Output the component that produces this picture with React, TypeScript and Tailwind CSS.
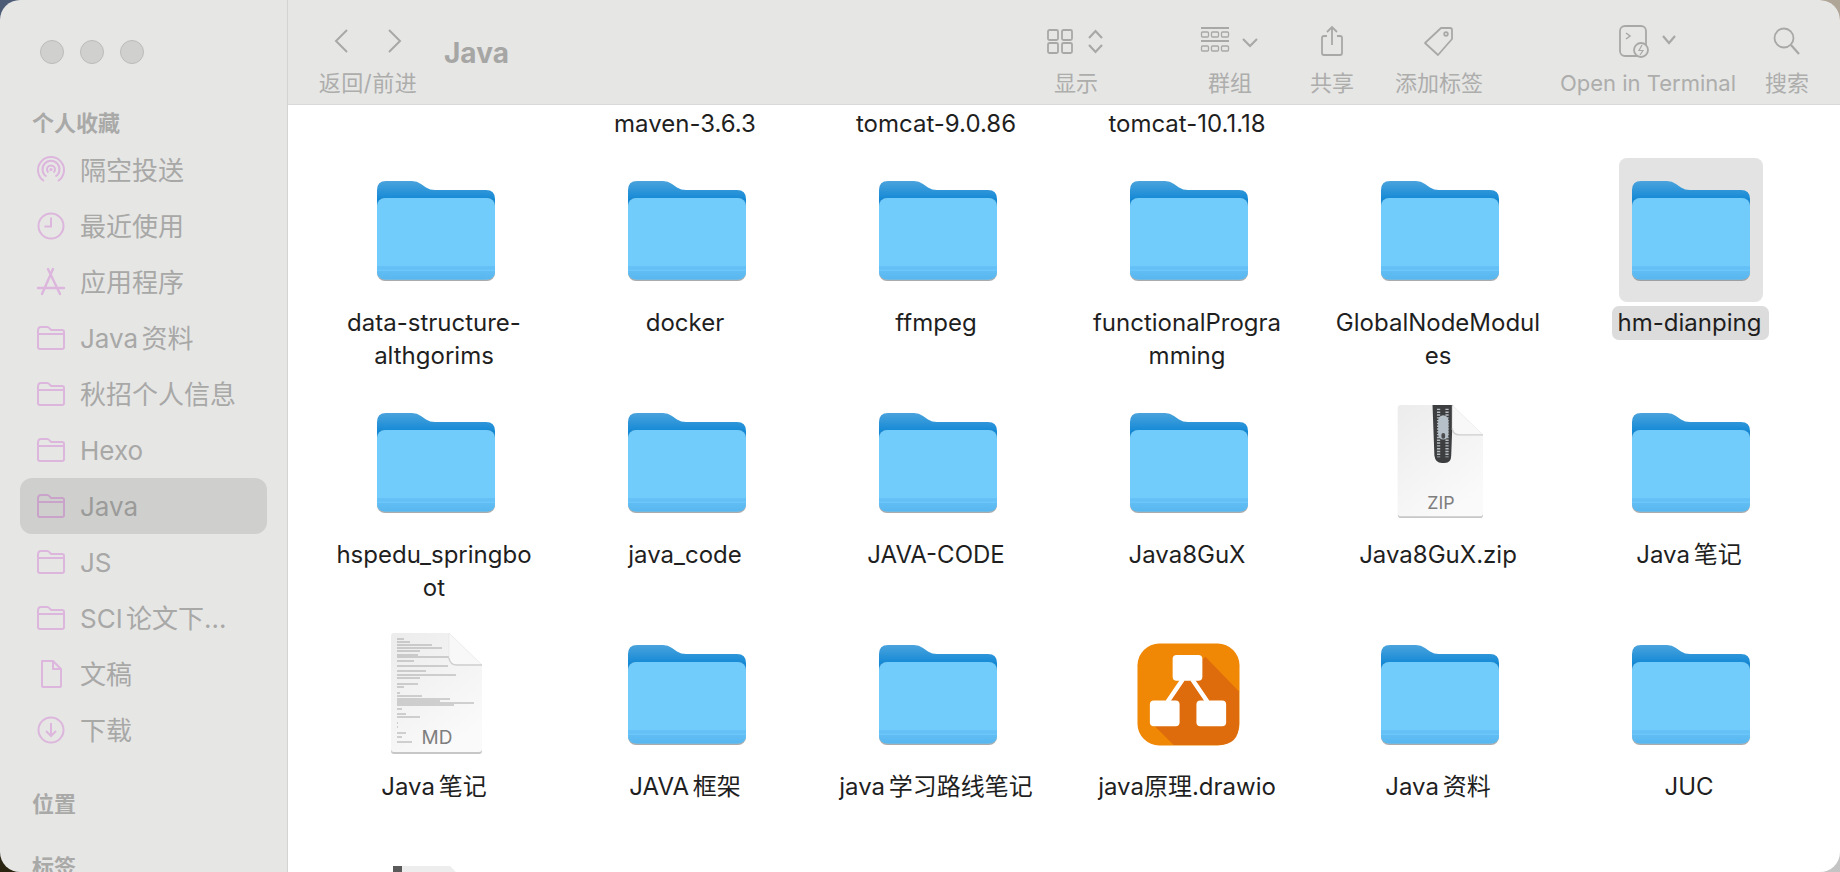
import React from "react";

const CJK = '"Inter","Noto Sans CJK SC",sans-serif';

function Folder() {
  return (
    <svg width="120" height="102" viewBox="0 0 120 102" className="block">
      <defs>
        <linearGradient id="fb" x1="0" y1="0" x2="0" y2="1">
          <stop offset="0" stopColor="#4aa3dc" />
          <stop offset="0.5" stopColor="#1288d6" />
          <stop offset="1" stopColor="#1288d6" />
        </linearGradient>
        <linearGradient id="fs" x1="0" y1="0" x2="0" y2="1">
          <stop offset="0" stopColor="#66c2f7" />
          <stop offset="1" stopColor="#58b6ef" />
        </linearGradient>
      </defs>
      <path d="M1 11 Q1 2 10 2 H36 Q41 2 45 5 L50 8.500 Q54 11 59 11 H110 Q119 11 119 20 V40 H1 Z" fill="url(#fb)" />
      <rect x="1" y="19" width="118" height="83" rx="8" fill="#6f7478" opacity="0.6" />
      <rect x="1" y="19" width="118" height="81.500" rx="8" fill="#71ccfc" />
      <path d="M1 87 H119 V92 Q119 100.500 110 100.500 H10 Q1 100.500 1 92 Z" fill="url(#fs)" />
      <path d="M1 90.500 H119 V92 H1 Z" fill="#6cc6f9" />
    </svg>
  );
}

function DocPage({ label, lines, zip, w, h }: { label?: string; lines?: boolean; zip?: boolean; w: number; h: number }) {
  const id = "pg" + (label ?? "x");
  return (
    <svg width={w} height={h + 3} viewBox="0 0 92 122" className="block shrink-0">
      <defs>
        <linearGradient id={id} x1="0" y1="0" x2="0.6" y2="1">
          <stop offset="0" stopColor="#ececec" />
          <stop offset="1" stopColor="#fafafa" />
        </linearGradient>
      </defs>
      <path d="M4 0 H59 L92 32 V116 Q92 119 89 119 H4 Q1 119 1 116 V3 Q1 0 4 0 Z" fill="#8f8f8f" transform="translate(0 2)" opacity="0.5" />
      <path d="M4 0 H59 L92 32 V116 Q92 119 89 119 H4 Q1 119 1 116 V3 Q1 0 4 0 Z" fill={"url(#" + id + ")"} />
      {lines && (
        <g stroke="#7f7f7f" strokeWidth="0.8" opacity="0.8">
          {[6, 9, 12, 15, 18, 22, 24, 28, 33, 38, 42, 45, 51, 54, 60, 63, 66, 68, 70, 72, 76, 81, 84, 90, 94, 100, 104, 109].map((y, i) => (
            <line key={i} x1="7" x2={[14, 20, 42, 52, 30, 28, 60, 24, 58, 36, 66, 30, 28, 14, 10, 32, 60, 50, 84, 64, 12, 16, 30, 8, 8, 16, 12, 22][i]} y1={y} y2={y} />
          ))}
        </g>
      )}
      {zip && (
        <g>
          <path d="M38 0 H60 L58 54 Q58 62 51 62 H48 Q41 62 40 54 Z" fill="#3c3e40" />
          <path d="M44.500 4 V56 M53.500 4 V56" stroke="#b8bcc0" strokeWidth="3.500" strokeDasharray="1.500 1.500" />
          <rect x="44" y="11" width="11" height="26" rx="5.500" fill="#b5c0c8" />
          <rect x="47.500" y="30" width="4" height="6" rx="2" fill="#4a4c50" />
        </g>
      )}
      <path d="M59 0 L92 32 H67 Q59 32 59 24 Z" fill="#f8f8f8" stroke="#e0e0e0" strokeWidth="0.500" />
      <path d="M59 25 Q60 32 67 32 H92" fill="none" stroke="#cfcfcf" strokeWidth="1.500" />
      {label && (
        <text x="47" y="111" textAnchor="middle" fontSize="19" fill="#7e7e7e" fontFamily="Inter, sans-serif">{label}</text>
      )}
    </svg>
  );
}

function CutDoc() {
  return (
    <svg width="88" height="108" viewBox="0 0 88 108" className="block shrink-0">
      <path d="M4 0 H58 L87 30 V108 H1 V3 Q1 0 4 0 Z" fill="#ededed" />
      <rect x="1" y="0" width="9" height="12" fill="#5a5a5a" />
    </svg>
  );
}

function Drawio() {
  return (
    <svg width="103" height="103" viewBox="0 0 104 104" className="block">
      <rect x="0.500" y="0.500" width="103" height="103" rx="22" fill="#f08705" />
      <path d="M69 14 L103 49 V82 Q103 103 82 103 H37 L14 80 L50 30 Z" fill="#df6c0c" />
      <g fill="#fff">
        <rect x="36" y="12" width="30" height="26" rx="4" />
        <rect x="13" y="58" width="30" height="26" rx="4" />
        <rect x="60" y="58" width="30" height="26" rx="4" />
        <path d="M44 36 L48 38 L33 60 L29 58 Z M58 36 L54 38 L69 60 L73 58 Z" />
      </g>
    </svg>
  );
}

type Item = { name: string; kind?: "folder" | "zip" | "md" | "drawio"; sel?: boolean };

const items: Item[] = [
  { name: "data-structure-\nalthgorims" },
  { name: "docker" },
  { name: "ffmpeg" },
  { name: "functionalProgra\nmming" },
  { name: "GlobalNodeModul\nes" },
  { name: "hm-dianping", sel: true },
  { name: "hspedu_springbo\not" },
  { name: "java_code" },
  { name: "JAVA-CODE" },
  { name: "Java8GuX" },
  { name: "Java8GuX.zip", kind: "zip" },
  { name: "Java 笔记" },
  { name: "Java 笔记", kind: "md" },
  { name: "JAVA 框架" },
  { name: "java 学习路线笔记" },
  { name: "java原理.drawio", kind: "drawio" },
  { name: "Java 资料" },
  { name: "JUC" },
];

function Cell({ item }: { item: Item }) {
  const kind = item.kind ?? "folder";
  return (
    <div className="flex flex-col items-center h-[232px]">
      <div className={"w-[144px] h-[144px] flex items-center justify-center rounded-[8px] " + (item.sel ? "bg-[#e3e3e3]" : "")}>
        {kind === "folder" && <Folder />}
        {kind === "zip" && <DocPage label="ZIP" zip w={86} h={115} />}
        {kind === "md" && <DocPage label="MD" lines w={92} h={119} />}
        {kind === "drawio" && <Drawio />}
      </div>
      <div className={"mt-1 text-center whitespace-pre text-[24px] leading-[33px] [word-spacing:-3px] text-[#1f1f1f] " + (item.sel ? "bg-[#dcdcdc] rounded-[7px] pl-[6px] pr-[8px] h-[34px]" : "pr-[3px]")}>
        {item.name}
      </div>
    </div>
  );
}

function SideIcon({ type, dark }: { type: string; dark?: boolean }) {
  const stroke = dark ? "#c9a3c9" : "#dcb6dc";
  const common = { width: 30, height: 30, viewBox: "0 0 30 30", fill: "none", stroke, strokeWidth: 2 };
  if (type === "air")
    return (
      <svg {...common}>
        <path d="M8 26 A13 13 0 1 1 22 26" />
        <path d="M10.500 21.500 A8.500 8.500 0 1 1 19.500 21.500" />
        <path d="M12.500 17.500 A4 4 0 1 1 17.500 17.500" />
        <circle cx="15" cy="14.500" r="1.600" fill={stroke} stroke="none" />
      </svg>
    );
  if (type === "clock")
    return (
      <svg {...common}>
        <circle cx="15" cy="15" r="12.500" />
        <path d="M15 6.500 V15.500 H8.500" />
      </svg>
    );
  if (type === "app")
    return (
      <svg {...common}>
        <path d="M12 2 L24 27 M17 2 L6 27 M2 21 H28" strokeLinecap="round" strokeWidth="2.400" />
      </svg>
    );
  if (type === "doc")
    return (
      <svg {...common}>
        <path d="M6 2 H17 L25 10 V27 Q25 28 24 28 H7 Q6 28 6 27 Z M17 2 V10 H25" strokeLinejoin="round" />
      </svg>
    );
  if (type === "down")
    return (
      <svg {...common}>
        <circle cx="15" cy="15" r="12.500" />
        <path d="M15 8 V21 M10 16 L15 21 L20 16" />
      </svg>
    );
  return (
    <svg {...common}>
      <path d="M2 8 Q2 4 5 4 H11 Q13 4 14 6 L15 7 H26 Q28 7 28 9 V24 Q28 26 26 26 H4 Q2 26 2 24 Z M2 11 H28" />
    </svg>
  );
}

const side: [string, string][] = [
  ["隔空投送", "air"],
  ["最近使用", "clock"],
  ["应用程序", "app"],
  ["Java 资料", "f"],
  ["秋招个人信息", "f"],
  ["Hexo", "f"],
  ["Java", "f"],
  ["JS", "f"],
  ["SCI 论文下…", "f"],
  ["文稿", "doc"],
  ["下载", "down"],
];

function Sidebar() {
  return (
    <aside className="w-[288px] shrink-0 h-full bg-[#e6e6e5] border-r border-[#d4d4d3] overflow-hidden rounded-l-[20px]">
      <div className="flex gap-[16px] pl-[40px] pt-[40px]">
        {[0, 1, 2].map((i) => (
          <span key={i} className="w-[24px] h-[24px] rounded-full bg-[#d0d0ce] border border-[#bcbcba]" />
        ))}
      </div>
      <div className="pl-[32px] mt-[44px] text-[22px] leading-[30px] font-bold text-[#a9a9a8]">个人收藏</div>
      <div className="mt-[4px] flex flex-col">
        {side.map(([name, t]) => (
          <div key={name} className={"mx-[20px] h-[56px] flex items-center rounded-[12px] pl-[16px] gap-[14px] " + (name === "Java" ? "bg-[#cfcfce]" : "")}>
            <SideIcon type={t} dark={name === "Java"} />
            <span className={"text-[26px] whitespace-nowrap leading-[30px] pt-[2px] [word-spacing:-4px] " + (name === "Java" ? "text-[#9b9b9a]" : "text-[#a8a8a7]")}>{name}</span>
          </div>
        ))}
      </div>
      <div className="pl-[32px] mt-[31px] text-[22px] leading-[30px] font-bold text-[#a9a9a8]">位置</div>
      <div className="pl-[32px] mt-[33px] text-[22px] leading-[30px] font-bold text-[#a9a9a8]">标签</div>
    </aside>
  );
}

const ic = { fill: "none", stroke: "#a8a8a7", strokeWidth: 1.8 };

function Tool({ label, width, children, gap = 0 }: { label: string; width: number; gap?: number; children: React.ReactNode }) {
  return (
    <div className="flex flex-col items-center shrink-0" style={{ width, marginLeft: gap }}>
      <div className="h-[52px] flex items-center justify-center">{children}</div>
      <div className="mt-[1px] text-[22px] leading-[30px] text-[#adadac] whitespace-nowrap">{label}</div>
    </div>
  );
}

function Toolbar() {
  return (
    <header className="h-[105px] bg-[#e6e6e5] border-b border-[#d9d9d8] rounded-tr-[20px] flex items-start pt-[15px]">
      <div className="ml-[29px] w-[102px] flex flex-col items-center">
        <div className="h-[52px] flex items-center gap-[24px]">
          <svg width="28" height="28" viewBox="0 0 28 28" {...ic} strokeWidth={2}><path d="M19 3 L8 14 L19 25" /></svg>
          <svg width="28" height="28" viewBox="0 0 28 28" {...ic} strokeWidth={2}><path d="M9 3 L20 14 L9 25" /></svg>
        </div>
        <div className="mt-[1px] text-[22px] leading-[30px] text-[#adadac] whitespace-nowrap tracking-[0.5px]">返回/前进</div>
      </div>
      <div className="ml-[25px] mt-[20px] text-[28px] leading-[36px] font-bold text-[#a6a6a5]">Java</div>
      <div className="ml-auto flex items-start mr-[18px]">
        <Tool label="显示" width={100}>
          <svg width="58" height="28" viewBox="0 0 58 28" {...ic}>
            <rect x="1" y="3" width="10" height="10" rx="1.500" /><rect x="15" y="3" width="10" height="10" rx="1.500" />
            <rect x="1" y="16" width="10" height="10" rx="1.500" /><rect x="15" y="16" width="10" height="10" rx="1.500" />
            <path d="M42 11 L48.500 4 L55 11 M42 18 L48.500 25 L55 18" strokeWidth="2.200" />
          </svg>
        </Tool>
        <Tool label="群组" width={100} gap={54}>
          <svg width="60" height="30" viewBox="0 0 60 30" {...ic}>
            <path d="M1 2 H29 M1 15 H29" strokeWidth="2" />
            <rect x="1.500" y="6" width="7" height="5" rx="1" strokeWidth="1.300" /><rect x="11.500" y="6" width="7" height="5" rx="1" strokeWidth="1.300" /><rect x="21.500" y="6" width="7" height="5" rx="1" strokeWidth="1.300" />
            <rect x="1.500" y="20" width="7" height="5" rx="1" strokeWidth="1.300" /><rect x="11.500" y="20" width="7" height="5" rx="1" strokeWidth="1.300" /><rect x="21.500" y="20" width="7" height="5" rx="1" strokeWidth="1.300" />
            <path d="M43 13 L50 20 L57 13" strokeWidth="2.200" />
          </svg>
        </Tool>
        <Tool label="共享" width={104}>
          <svg width="26" height="32" viewBox="0 0 26 32" {...ic}>
            <path d="M8 11 H5 Q3 11 3 13 V28 Q3 30 5 30 H21 Q23 30 23 28 V13 Q23 11 21 11 H18 M13 20 V2 M8 7 L13 2 L18 7" />
          </svg>
        </Tool>
        <Tool label="添加标签" width={110}>
          <svg width="32" height="32" viewBox="0 0 32 32" {...ic}>
            <path d="M18 3 H27 Q29 3 29 5 V14 L15 30 L2 18 Z" strokeLinejoin="round" />
            <circle cx="23" cy="9" r="1.800" />
          </svg>
        </Tool>
        <Tool label="Open in Terminal" width={208} gap={50}>
          <svg width="62" height="34" viewBox="0 0 62 34" {...ic}>
            <rect x="3" y="2" width="26" height="30" rx="5" />
            <path d="M9 9 L13 12 L9 15" strokeWidth="1.500" />
            <circle cx="24" cy="26" r="7" fill="#e6e6e5" />
            <path d="M25 21 L22 26.500 H26 L23 31" strokeWidth="1.200" />
            <path d="M46 12 L52 19 L58 12" strokeWidth="2.200" />
          </svg>
        </Tool>
        <Tool label="搜索" width={70}>
          <svg width="30" height="30" viewBox="0 0 30 30" {...ic}>
            <circle cx="12" cy="12" r="9.500" /><path d="M19 19 L27 28" strokeWidth="2.200" />
          </svg>
        </Tool>
      </div>
    </header>
  );
}

export default function App() {
  return (
    <div className="w-[1840px] h-[872px] overflow-hidden flex bg-[conic-gradient(#b0a698_0deg_90deg,#c4c4c4_90deg_180deg,#2a2510_180deg_270deg,#4c5b76_270deg_360deg)]" style={{ fontFamily: CJK }}>
      <Sidebar />
      <main className="flex-1 min-w-0 flex flex-col h-full overflow-hidden rounded-r-[20px]">
        <Toolbar />
        <div className="flex-1 min-h-0 overflow-hidden bg-white pl-[22px] pr-[24px]">
          <div className="grid grid-cols-6 pt-[2px]">
            <div />
            {["maven-3.6.3", "tomcat-9.0.86", "tomcat-10.1.18"].map((n) => (
              <div key={n} className="text-center text-[24px] leading-[33px] text-[#1f1f1f] pr-[3px]">{n}</div>
            ))}
          </div>
          <div className="grid grid-cols-6 mt-[18px]">
            {items.map((it, i) => (
              <Cell key={i} item={it} />
            ))}
            <div className="flex justify-center pt-[12px]"><CutDoc /></div>
          </div>
        </div>
      </main>
    </div>
  );
}
